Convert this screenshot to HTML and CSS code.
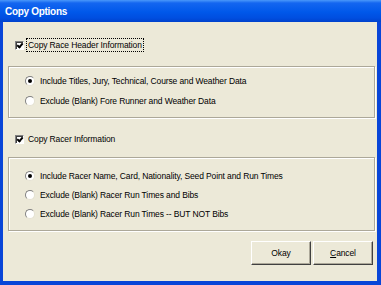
FILE: index.html
```html
<!DOCTYPE html>
<html lang="en">
<head>
    <meta charset="UTF-8">
    <title>Copy Options</title>
    <link rel="stylesheet" href="styles.css">
</head>
<body>
    <div class="window">
        <div class="title-bar">Copy Options</div>
        <div class="client">
            <div class="check-row first">
                <span class="checkbox checked"></span>
                <span class="label focused">Copy Race Header Information</span>
            </div>

            <div class="group group-race">
                <div class="radio-row">
                    <span class="radio selected"></span>
                    <span class="label">Include Titles, Jury, Technical, Course and Weather Data</span>
                </div>
                <div class="radio-row">
                    <span class="radio"></span>
                    <span class="label">Exclude (Blank) Fore Runner and Weather Data</span>
                </div>
            </div>

            <div class="check-row second">
                <span class="checkbox checked"></span>
                <span class="label">Copy Racer Information</span>
            </div>

            <div class="group group-racer">
                <div class="radio-row">
                    <span class="radio selected"></span>
                    <span class="label">Include Racer Name, Card, Nationality, Seed Point and Run Times</span>
                </div>
                <div class="radio-row">
                    <span class="radio"></span>
                    <span class="label">Exclude (Blank) Racer Run Times and Bibs</span>
                </div>
                <div class="radio-row">
                    <span class="radio"></span>
                    <span class="label">Exclude (Blank) Racer Run Times -- BUT NOT Bibs</span>
                </div>
            </div>

            <div class="buttons">
                <button class="btn">Okay</button>
                <button class="btn"><u>C</u>ancel</button>
            </div>
        </div>
    </div>
</body>
</html>
```

FILE: styles.css
```css
body {
    margin: 0;
    font-family: 'Liberation Sans', Arial, sans-serif;
    background-color: #0842d6;
}

.window {
    width: 381px;
    height: 285px;
    box-sizing: border-box;
    display: flex;
    flex-direction: column;
    background: #0845d8;
    padding: 0 4px 4px 3px;
}

.title-bar {
    height: 22px;
    margin: 0 -4px 0 -3px;
    padding-left: 5px;
    display: flex;
    align-items: center;
    color: #fff;
    font-weight: bold;
    font-size: 10px;
    letter-spacing: -0.3px;
    background: linear-gradient(#4a98fa 0, #1466f0 3px, #0058ea 12px, #004ee0 18px, #0042cc 22px);
}

.client {
    flex: 1;
    background-color: #ece9d8;
    display: flex;
    flex-direction: column;
    font-size: 8.5px;
    letter-spacing: -0.12px;
    color: #000;
}

.check-row {
    height: 14px;
    display: flex;
    align-items: center;
    padding-left: 12px;
}

.check-row.first {
    margin-top: 16px;
}

.check-row.second {
    margin-top: 14px;
}

.checkbox {
    width: 9px;
    height: 9px;
    box-sizing: border-box;
    background: #fff;
    border: 1px solid;
    border-color: #808080 #fff #fff #808080;
    box-shadow: inset 1px 1px 0 #404040;
    margin-right: 3px;
    position: relative;
}

.checkbox.checked::after {
    content: "";
    position: absolute;
    left: 2px;
    top: 0px;
    width: 2px;
    height: 4px;
    border: solid #000;
    border-width: 0 2px 2px 0;
    transform: rotate(40deg);
}

.check-row .label {
    padding: 1px 1px;
}

.label.focused {
    outline: 1px dotted #000;
}

.group {
    margin-left: 5px;
    width: 367px;
    box-sizing: border-box;
    border: 1px solid #aca899;
    box-shadow: 1px 1px 0 #fff, inset 1px 1px 0 #fff;
    display: flex;
    flex-direction: column;
    padding-left: 16px;
}

.group-race {
    margin-top: 14px;
    height: 52px;
    padding-top: 4px;
}

.group-race .radio-row {
    height: 20px;
}

.group-racer {
    margin-top: 11px;
    height: 74px;
    padding-top: 8px;
}

.group-racer .radio-row {
    height: 19px;
}

.radio-row {
    display: flex;
    align-items: center;
}

.radio {
    width: 10px;
    height: 10px;
    box-sizing: border-box;
    border-radius: 50%;
    background: #fff;
    border: 1px solid;
    border-color: #808080 #e4e1d2 #e4e1d2 #808080;
    margin-right: 5px;
    position: relative;
}

.radio.selected::after {
    content: "";
    position: absolute;
    left: 2px;
    top: 2px;
    width: 4px;
    height: 4px;
    border-radius: 50%;
    background: #000;
}

.buttons {
    margin-top: 10px;
    display: flex;
    justify-content: flex-end;
    gap: 2px;
    padding-right: 4px;
}

.btn {
    width: 60px;
    height: 24px;
    background: #ece9d8;
    border: 1px solid;
    border-color: #fff #404040 #404040 #fff;
    box-shadow: inset -1px -1px 0 #aca899;
    font-family: 'Liberation Sans', Arial, sans-serif;
    font-size: 8.5px;
    letter-spacing: -0.12px;
    color: #000;
    padding: 0;
}
```
